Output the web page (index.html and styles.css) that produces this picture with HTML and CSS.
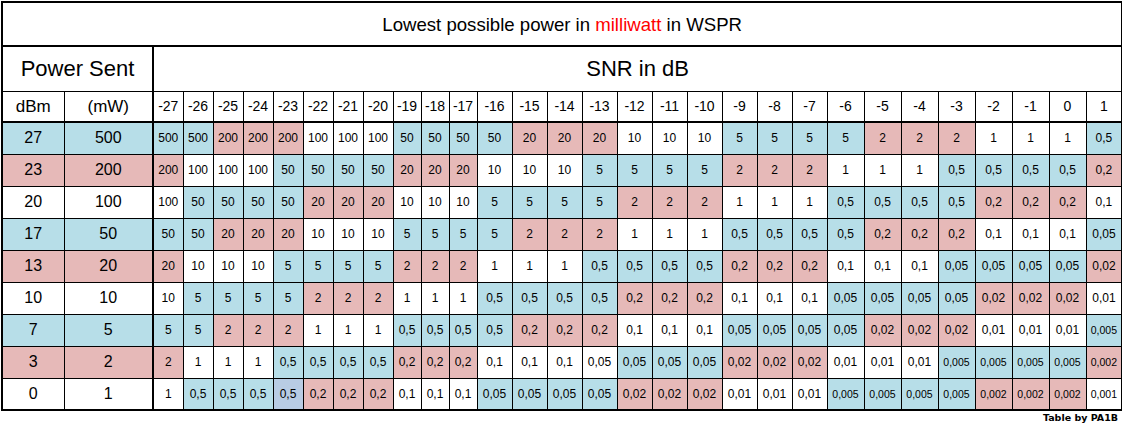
FILE: index.html
```html
<!DOCTYPE html>
<html lang="en">
<head>
<meta charset="utf-8">
<title>Lowest possible power in milliwatt in WSPR</title>
<link rel="stylesheet" href="styles.css">
</head>
<body>
<div class="sheet">
<table class="grid">
<colgroup>
<col class="c-dbm"><col class="c-mw">
<col class="ca"><col class="ca"><col class="ca"><col class="ca"><col class="ca"><col class="ca"><col class="ca"><col class="ca">
<col class="cb"><col class="cb"><col class="cb">
<col class="cc"><col class="cc"><col class="cc"><col class="cc"><col class="cc"><col class="cc"><col class="cc"><col class="cc"><col class="cc"><col class="cc">
<col class="cd"><col class="cd"><col class="cd"><col class="cd"><col class="cd"><col class="cd"><col class="cd"><col class="ce">
</colgroup>
<tbody>
<tr class="r-title"><td colspan="31" class="title">Lowest possible power in <span class="red">milliwatt</span> in WSPR</td></tr>
<tr class="r-big"><td colspan="2" class="big sep">Power Sent</td><td colspan="29" class="big">SNR in dB</td></tr>
<tr class="r-head">
<td class="lab">dBm</td><td class="lab sep">(mW)</td>
<td>-27</td><td>-26</td><td>-25</td><td>-24</td><td>-23</td><td>-22</td><td>-21</td><td>-20</td><td>-19</td><td>-18</td><td>-17</td><td>-16</td><td>-15</td><td>-14</td><td>-13</td><td>-12</td><td>-11</td><td>-10</td><td>-9</td><td>-8</td><td>-7</td><td>-6</td><td>-5</td><td>-4</td><td>-3</td><td>-2</td><td>-1</td><td>0</td><td>1</td>
</tr>
<tr>
<td class="lab b">27</td><td class="lab sep b">500</td>
<td class="b">500</td><td class="b">500</td><td class="p">200</td><td class="p">200</td><td class="p">200</td><td>100</td><td>100</td><td>100</td><td class="b">50</td><td class="b">50</td><td class="b">50</td><td class="b">50</td><td class="p">20</td><td class="p">20</td><td class="p">20</td><td>10</td><td>10</td><td>10</td><td class="b">5</td><td class="b">5</td><td class="b">5</td><td class="b">5</td><td class="p">2</td><td class="p">2</td><td class="p">2</td><td>1</td><td>1</td><td>1</td><td class="b">0,5</td>
</tr>
<tr>
<td class="lab p">23</td><td class="lab sep p">200</td>
<td class="p">200</td><td>100</td><td>100</td><td>100</td><td class="b">50</td><td class="b">50</td><td class="b">50</td><td class="b">50</td><td class="p">20</td><td class="p">20</td><td class="p">20</td><td>10</td><td>10</td><td>10</td><td class="b">5</td><td class="b">5</td><td class="b">5</td><td class="b">5</td><td class="p">2</td><td class="p">2</td><td class="p">2</td><td>1</td><td>1</td><td>1</td><td class="b">0,5</td><td class="b">0,5</td><td class="b">0,5</td><td class="b">0,5</td><td class="p">0,2</td>
</tr>
<tr>
<td class="lab">20</td><td class="lab sep">100</td>
<td>100</td><td class="b">50</td><td class="b">50</td><td class="b">50</td><td class="b">50</td><td class="p">20</td><td class="p">20</td><td class="p">20</td><td>10</td><td>10</td><td>10</td><td class="b">5</td><td class="b">5</td><td class="b">5</td><td class="b">5</td><td class="p">2</td><td class="p">2</td><td class="p">2</td><td>1</td><td>1</td><td>1</td><td class="b">0,5</td><td class="b">0,5</td><td class="b">0,5</td><td class="b">0,5</td><td class="p">0,2</td><td class="p">0,2</td><td class="p">0,2</td><td>0,1</td>
</tr>
<tr>
<td class="lab b">17</td><td class="lab sep b">50</td>
<td class="b">50</td><td class="b">50</td><td class="p">20</td><td class="p">20</td><td class="p">20</td><td>10</td><td>10</td><td>10</td><td class="b">5</td><td class="b">5</td><td class="b">5</td><td class="b">5</td><td class="p">2</td><td class="p">2</td><td class="p">2</td><td>1</td><td>1</td><td>1</td><td class="b">0,5</td><td class="b">0,5</td><td class="b">0,5</td><td class="b">0,5</td><td class="p">0,2</td><td class="p">0,2</td><td class="p">0,2</td><td>0,1</td><td>0,1</td><td>0,1</td><td class="b">0,05</td>
</tr>
<tr>
<td class="lab p">13</td><td class="lab sep p">20</td>
<td class="p">20</td><td>10</td><td>10</td><td>10</td><td class="b">5</td><td class="b">5</td><td class="b">5</td><td class="b">5</td><td class="p">2</td><td class="p">2</td><td class="p">2</td><td>1</td><td>1</td><td>1</td><td class="b">0,5</td><td class="b">0,5</td><td class="b">0,5</td><td class="b">0,5</td><td class="p">0,2</td><td class="p">0,2</td><td class="p">0,2</td><td>0,1</td><td>0,1</td><td>0,1</td><td class="b">0,05</td><td class="b">0,05</td><td class="b">0,05</td><td class="b">0,05</td><td class="p">0,02</td>
</tr>
<tr>
<td class="lab">10</td><td class="lab sep">10</td>
<td>10</td><td class="b">5</td><td class="b">5</td><td class="b">5</td><td class="b">5</td><td class="p">2</td><td class="p">2</td><td class="p">2</td><td>1</td><td>1</td><td>1</td><td class="b">0,5</td><td class="b">0,5</td><td class="b">0,5</td><td class="b">0,5</td><td class="p">0,2</td><td class="p">0,2</td><td class="p">0,2</td><td>0,1</td><td>0,1</td><td>0,1</td><td class="b">0,05</td><td class="b">0,05</td><td class="b">0,05</td><td class="b">0,05</td><td class="p">0,02</td><td class="p">0,02</td><td class="p">0,02</td><td>0,01</td>
</tr>
<tr>
<td class="lab b">7</td><td class="lab sep b">5</td>
<td class="b">5</td><td class="b">5</td><td class="p">2</td><td class="p">2</td><td class="p">2</td><td>1</td><td>1</td><td>1</td><td class="b">0,5</td><td class="b">0,5</td><td class="b">0,5</td><td class="b">0,5</td><td class="p">0,2</td><td class="p">0,2</td><td class="p">0,2</td><td>0,1</td><td>0,1</td><td>0,1</td><td class="b">0,05</td><td class="b">0,05</td><td class="b">0,05</td><td class="b">0,05</td><td class="p">0,02</td><td class="p">0,02</td><td class="p">0,02</td><td>0,01</td><td>0,01</td><td>0,01</td><td class="b s">0,005</td>
</tr>
<tr>
<td class="lab p">3</td><td class="lab sep p">2</td>
<td class="p">2</td><td>1</td><td>1</td><td>1</td><td class="b">0,5</td><td class="b">0,5</td><td class="b">0,5</td><td class="b">0,5</td><td class="p">0,2</td><td class="p">0,2</td><td class="p">0,2</td><td>0,1</td><td>0,1</td><td>0,1</td><td>0,05</td><td class="b">0,05</td><td class="b">0,05</td><td class="b">0,05</td><td class="p">0,02</td><td class="p">0,02</td><td class="p">0,02</td><td>0,01</td><td>0,01</td><td>0,01</td><td class="b s">0,005</td><td class="b s">0,005</td><td class="b s">0,005</td><td class="b s">0,005</td><td class="p s">0,002</td>
</tr>
<tr>
<td class="lab">0</td><td class="lab sep">1</td>
<td>1</td><td class="b">0,5</td><td class="b">0,5</td><td class="b">0,5</td><td class="l">0,5</td><td class="p">0,2</td><td class="p">0,2</td><td class="p">0,2</td><td>0,1</td><td>0,1</td><td>0,1</td><td class="b">0,05</td><td class="b">0,05</td><td class="b">0,05</td><td class="b">0,05</td><td class="p">0,02</td><td class="p">0,02</td><td class="p">0,02</td><td>0,01</td><td>0,01</td><td>0,01</td><td class="b s">0,005</td><td class="b s">0,005</td><td class="b s">0,005</td><td class="b s">0,005</td><td class="p s">0,002</td><td class="p s">0,002</td><td class="p s">0,002</td><td class="s">0,001</td>
</tr>
</tbody>
</table>
<div class="credit">Table by PA1B</div>
</div>
</body>
</html>
```

FILE: styles.css
```css
* { box-sizing: border-box; }

body {
  margin: 0;
  background: #ffffff;
  color: #000000;
  font-family: "Liberation Sans", Arial, sans-serif;
}

.sheet {
  width: 1122px;
  padding: 1px 0 0 1px;
}

.grid {
  border-collapse: collapse;
  table-layout: fixed;
  width: 1120px;
  border: 2px solid #000;
}

.c-dbm { width: 62px; }
.c-mw { width: 89px; }
.ca { width: 30px; }
.cb { width: 28px; }
.cc { width: 35px; }
.cd { width: 37px; }
.ce { width: 36px; }

.grid td {
  border: 1px solid #000;
  padding: 0;
  height: 32px;
  text-align: center;
  vertical-align: middle;
  font-size: 12px;
  line-height: 1;
  white-space: nowrap;
  overflow: hidden;
}

.grid .r-title td {
  height: 44px;
  font-size: 18.6px;
  padding-top: 2px;
  border-bottom: 2px solid #000;
}

.grid .r-big td {
  height: 45px;
  font-size: 22px;
}

.grid .r-head td {
  height: 31px;
  font-size: 14px;
  border-bottom: 2px solid #000;
}

.grid .r-head td.lab { font-size: 17px; }

.grid td.lab { font-size: 16px; }

.grid td.sep { border-right: 2px solid #000; }

.grid td.s { font-size: 10.5px; }

.red { color: #ff0000; }

.b { background: #b7dee8; }
.p { background: #e6b9b8; }
.l { background: #b8cce4; }

.credit {
  text-align: right;
  padding-right: 4px;
  padding-top: 1px;
  font-family: "DejaVu Sans", sans-serif;
  font-weight: bold;
  font-size: 9.5px;
  line-height: 11px;
}
```
